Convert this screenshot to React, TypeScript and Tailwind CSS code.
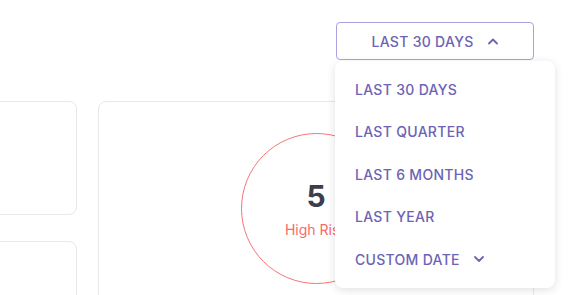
import React from 'react';

const options = ['LAST 30 DAYS', 'LAST QUARTER', 'LAST 6 MONTHS', 'LAST YEAR'];

const Chevron: React.FC<{ up?: boolean }> = ({ up }) => (
  <svg width="12" height="8" viewBox="0 0 12 8" fill="none" className="shrink-0">
    <polyline
      points={up ? '2,6.5 6,2.5 10,6.5' : '2,2 6,6 10,2'}
      stroke="#6c63b5"
      strokeWidth="1.8"
      strokeLinecap="round"
      strokeLinejoin="round"
    />
  </svg>
);

export default function App() {
  return (
    <div
      className="relative w-[568px] h-[295px] overflow-hidden bg-white"
      style={{ fontFamily: 'Inter, "Noto Sans", sans-serif' }}
    >
      {/* Header */}
      <div className="flex justify-end pt-[22px] pr-[34px]">
        <button className="flex items-center justify-center gap-[13px] w-[198px] h-[38px] rounded-[4px] border border-[#aaa1e2] bg-white text-[14px] font-medium tracking-[0.3px] text-[#6c63b5]">
          <span>LAST 30 DAYS</span>
          <Chevron up />
        </button>
      </div>

      {/* Cards */}
      <div className="flex gap-[21px] mt-[41px] ml-[-101px]">
        <div className="flex flex-col gap-[26px] w-[178px] shrink-0">
          <div className="h-[114px] rounded-[8px] border border-[#e8e8ec]" />
          <div className="h-[120px] rounded-[8px] border border-[#e8e8ec]" />
        </div>
        <div className="w-[436px] h-[240px] shrink-0 rounded-[8px] border border-[#e8e8ec] flex justify-center pt-[31px]">
          <div className="w-[151px] h-[151px] rounded-full border border-[#f87575] flex flex-col items-center justify-center">
            <span className="text-[30px] leading-none font-bold text-[#3e3d4d] mt-[4px]">5</span>
            <span className="text-[14px] text-[#f66a6a] mt-[8px]">High Risk</span>
          </div>
        </div>
      </div>

      {/* Dropdown menu */}
      <div className="absolute left-[335px] top-[61px] w-[220px] rounded-[8px] bg-white py-[7px] shadow-[0_2px_10px_rgba(0,0,0,0.12)]">
        {options.map(o => (
          <div
            key={o}
            className="h-[42.5px] flex items-center px-[20px] text-[14px] font-medium tracking-[0.3px] text-[#6c63b5]"
          >
            {o}
          </div>
        ))}
        <div className="h-[42.5px] flex items-center gap-[13px] px-[20px] text-[14px] font-medium tracking-[0.3px] text-[#6c63b5]">
          <span>CUSTOM DATE</span>
          <Chevron />
        </div>
      </div>
    </div>
  );
}
